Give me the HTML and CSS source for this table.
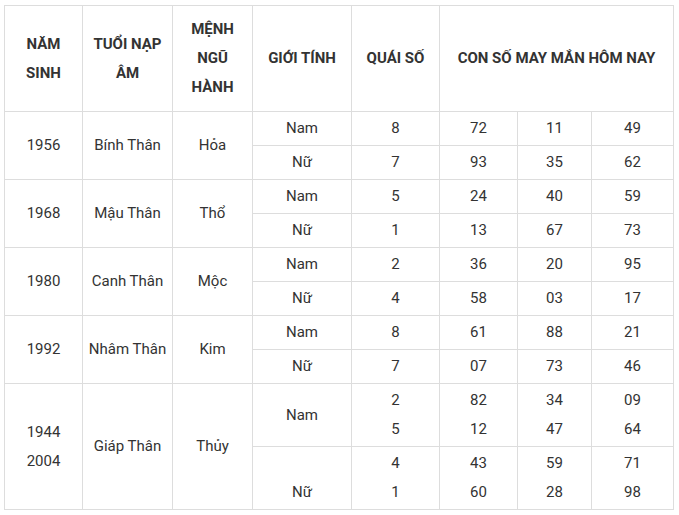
FILE: index.html
```html
<!DOCTYPE html>
<html lang="vi">
<head>
<meta charset="utf-8">
<link rel="stylesheet" href="styles.css">
</head>
<body>
<div class="wrap">
<table class="lucky">
<colgroup>
<col class="c1"><col class="c2"><col class="c3"><col class="c4"><col class="c5"><col class="c6"><col class="c7"><col class="c8">
</colgroup>
<thead>
<tr class="head">
<th>NĂM<br>SINH</th>
<th>TUỔI NẠP<br>ÂM</th>
<th>MỆNH<br>NGŨ<br>HÀNH</th>
<th>GIỚI TÍNH</th>
<th>QUÁI SỐ</th>
<th colspan="3">CON SỐ MAY MẮN HÔM NAY</th>
</tr>
</thead>
<tbody>
<tr class="sub"><td rowspan="2">1956</td><td rowspan="2">Bính Thân</td><td rowspan="2">Hỏa</td><td>Nam</td><td>8</td><td>72</td><td>11</td><td>49</td></tr>
<tr class="sub"><td>Nữ</td><td>7</td><td>93</td><td>35</td><td>62</td></tr>
<tr class="sub"><td rowspan="2">1968</td><td rowspan="2">Mậu Thân</td><td rowspan="2">Thổ</td><td>Nam</td><td>5</td><td>24</td><td>40</td><td>59</td></tr>
<tr class="sub"><td>Nữ</td><td>1</td><td>13</td><td>67</td><td>73</td></tr>
<tr class="sub"><td rowspan="2">1980</td><td rowspan="2">Canh Thân</td><td rowspan="2">Mộc</td><td>Nam</td><td>2</td><td>36</td><td>20</td><td>95</td></tr>
<tr class="sub"><td>Nữ</td><td>4</td><td>58</td><td>03</td><td>17</td></tr>
<tr class="sub"><td rowspan="2">1992</td><td rowspan="2">Nhâm Thân</td><td rowspan="2">Kim</td><td>Nam</td><td>8</td><td>61</td><td>88</td><td>21</td></tr>
<tr class="sub"><td>Nữ</td><td>7</td><td>07</td><td>73</td><td>46</td></tr>
<tr class="dbl"><td rowspan="2">1944<br>2004</td><td rowspan="2">Giáp Thân</td><td rowspan="2">Thủy</td><td>Nam</td><td>2<br>5</td><td>82<br>12</td><td>34<br>47</td><td>09<br>64</td></tr>
<tr class="dbl"><td><br>Nữ</td><td>4<br>1</td><td>43<br>60</td><td>59<br>28</td><td>71<br>98</td></tr>
</tbody>
</table>
</div>
</body>
</html>
```

FILE: styles.css
```css
html, body {
  margin: 0;
  padding: 0;
  background: #fff;
}
.wrap {
  padding: 5px 0 0 4px;
}
.lucky {
  border-collapse: collapse;
  table-layout: fixed;
  width: 669px;
  font-family: Roboto, "Liberation Sans", Arial, sans-serif;
  font-size: 15px;
  line-height: 29px;
  color: #333;
}
.c1 { width: 78px; }
.c2 { width: 90px; }
.c3 { width: 80px; }
.c4 { width: 99px; }
.c5 { width: 88px; }
.c6 { width: 78px; }
.c7 { width: 74px; }
.c8 { width: 82px; }
.lucky th,
.lucky td {
  border: 1px solid #ddd;
  padding: 0;
  text-align: center;
  vertical-align: middle;
}
.lucky th {
  font-weight: 700;
}
.head { height: 106px; }
.sub { height: 34px; }
.dbl { height: 63px; }
```
